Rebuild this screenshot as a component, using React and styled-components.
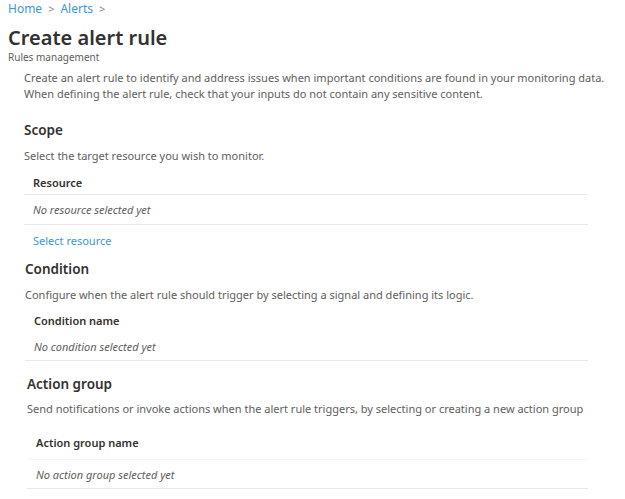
import React from 'react';
import styled, { createGlobalStyle } from 'styled-components';

const Global = createGlobalStyle`
  html, body {
    margin: 0;
    padding: 0;
    background: #ffffff;
  }
  body {
    font-family: "Noto Sans", "Open Sans", sans-serif;
    color: #323130;
  }
`;

const Page = styled.div`
  width: 625px;
  height: 499px;
  overflow: hidden;
  padding: 0 0 0 8px;
  box-sizing: border-box;
`;

const Breadcrumb = styled.nav`
  display: flex;
  align-items: center;
  gap: 6px;
  height: 16px;
  font-size: 12px;
  color: #3a96dd;
`;

const Crumb = styled.span`
  color: #3a96dd;
`;

const Chevron = styled.span`
  color: #8a8886;
  font-size: 11px;
`;

const Title = styled.h1`
  margin: 10px 0 0;
  font-size: 20px;
  line-height: 24px;
  font-weight: 600;
  color: #323130;
`;

const Subtitle = styled.div`
  margin-top: 1px;
  font-size: 10px;
  line-height: 13px;
  color: #605e5c;
`;

const Body = styled.div`
  padding: 0 0 0 16px;
  margin-top: 6px;
`;

const Intro = styled.p`
  margin: 0;
  font-size: 11px;
  line-height: 16px;
  color: #605e5c;
`;

const Section = styled.section`
  padding-left: ${p => p.$indent || 0}px;
  width: ${p => 564 - (p.$indent || 0)}px;
`;

const SectionTitle = styled.h2`
  margin: ${p => p.$top}px 0 0;
  font-size: 13.5px;
  line-height: 18px;
  font-weight: 600;
  color: #323130;
`;

const SectionText = styled.p`
  margin: ${p => p.$gap}px 0 0;
  font-size: 11px;
  line-height: 16px;
  color: #605e5c;
`;

const Table = styled.div`
  margin-top: ${p => p.$top}px;
`;

const HeadCell = styled.div`
  padding: 0 0 0 9px;
  height: ${p => p.$h}px;
  display: flex;
  align-items: center;
  font-size: 11px;
  font-weight: 600;
  color: #323130;
  border-bottom: 1px solid ${p => p.$line || '#e8e7e6'};
`;

const EmptyCell = styled.div`
  padding: 0 0 0 9px;
  height: ${p => p.$h}px;
  display: flex;
  align-items: center;
  font-size: 11px;
  font-style: italic;
  color: #605e5c;
  border-bottom: 1px solid #e8e7e6;
`;

const Link = styled.a`
  display: block;
  margin-top: 8px;
  padding-left: 9px;
  font-size: 11px;
  line-height: 16px;
  color: #3a96dd;
  text-decoration: none;
  cursor: pointer;
`;

export default function App() {
  return (
    <Page>
      <Global />
      <Breadcrumb>
        <Crumb>Home</Crumb>
        <Chevron>&gt;</Chevron>
        <Crumb>Alerts</Crumb>
        <Chevron>&gt;</Chevron>
      </Breadcrumb>
      <Title>Create alert rule</Title>
      <Subtitle>Rules management</Subtitle>
      <Body>
        <Intro>
          Create an alert rule to identify and address issues when important conditions are found in your monitoring data.
          <br />
          When defining the alert rule, check that your inputs do not contain any sensitive content.
        </Intro>

        <Section>
          <SectionTitle $top={19}>Scope</SectionTitle>
          <SectionText $gap={9}>Select the target resource you wish to monitor.</SectionText>
          <Table $top={6}>
            <HeadCell $h={24}>Resource</HeadCell>
            <EmptyCell $h={29}>No resource selected yet</EmptyCell>
          </Table>
          <Link>Select resource</Link>
        </Section>

        <Section $indent={1}>
          <SectionTitle $top={11}>Condition</SectionTitle>
          <SectionText $gap={9}>Configure when the alert rule should trigger by selecting a signal and defining its logic.</SectionText>
          <Table $top={5}>
            <HeadCell $h={24} $line="transparent">Condition name</HeadCell>
            <EmptyCell $h={27}>No condition selected yet</EmptyCell>
          </Table>
        </Section>

        <Section $indent={3}>
          <SectionTitle $top={14}>Action group</SectionTitle>
          <SectionText $gap={8}>Send notifications or invoke actions when the alert rule triggers, by selecting or creating a new action group</SectionText>
          <Table $top={8}>
            <HeadCell $h={34} $line="#f3f2f1">Action group name</HeadCell>
            <EmptyCell $h={28}>No action group selected yet</EmptyCell>
          </Table>
        </Section>
      </Body>
    </Page>
  );
}
